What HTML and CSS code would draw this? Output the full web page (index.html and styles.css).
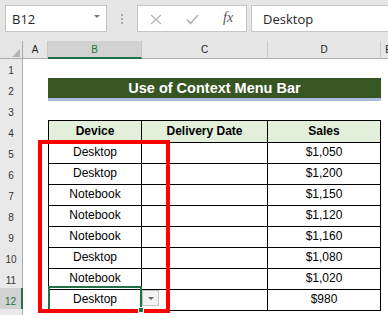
FILE: index.html
```html
<!DOCTYPE html>
<html lang="en">
<head>
    <meta charset="UTF-8">
    <meta name="viewport" content="width=device-width, initial-scale=1.0">
    <title>Use of Context Menu Bar</title>
    <link rel="stylesheet" href="styles.css">
</head>
<body>
    <!-- Formula bar -->
    <div class="toolbar">
        <div class="name-box">
            <span>B12</span>
            <span class="caret"></span>
        </div>
        <div class="grip"><i></i><i></i><i></i></div>
        <div class="fx-buttons">
            <svg class="btn-cancel" width="12" height="12" viewBox="0 0 12 12">
                <path d="M1 2 L11 11 M11 2 L1 11" stroke="#b4b4b4" stroke-width="1.3" fill="none"/>
            </svg>
            <svg class="btn-enter" width="13" height="11" viewBox="0 0 13 11">
                <path d="M1 5.5 L4.5 9.5 L12 1" stroke="#b4b4b4" stroke-width="1.6" fill="none"/>
            </svg>
            <span class="fx">fx</span>
        </div>
        <div class="formula">Desktop</div>
    </div>

    <!-- Worksheet -->
    <div class="sheet">
        <div class="row head">
            <div class="corner"></div>
            <div class="col-head">A</div>
            <div class="col-head active">B</div>
            <div class="col-head">C</div>
            <div class="col-head">D</div>
            <div class="col-head">E</div>
        </div>

        <div class="row">
            <div class="row-head">1</div>
            <div></div><div></div><div></div><div></div><div></div>
        </div>

        <div class="row">
            <div class="row-head">2</div>
            <div></div>
            <div class="title">Use of Context Menu Bar</div>
            <div></div>
        </div>

        <div class="row">
            <div class="row-head">3</div>
            <div></div><div></div><div></div><div></div><div></div>
        </div>

        <div class="row">
            <div class="row-head">4</div>
            <div></div>
            <div class="t th first">Device</div>
            <div class="t th">Delivery Date</div>
            <div class="t th">Sales</div>
            <div></div>
        </div>

        <div class="row">
            <div class="row-head">5</div>
            <div></div>
            <div class="t first">Desktop</div>
            <div class="t"></div>
            <div class="t">$1,050</div>
            <div></div>
        </div>

        <div class="row">
            <div class="row-head">6</div>
            <div></div>
            <div class="t first">Desktop</div>
            <div class="t"></div>
            <div class="t">$1,200</div>
            <div></div>
        </div>

        <div class="row">
            <div class="row-head">7</div>
            <div></div>
            <div class="t first">Notebook</div>
            <div class="t"></div>
            <div class="t">$1,150</div>
            <div></div>
        </div>

        <div class="row">
            <div class="row-head">8</div>
            <div></div>
            <div class="t first">Notebook</div>
            <div class="t"></div>
            <div class="t">$1,120</div>
            <div></div>
        </div>

        <div class="row">
            <div class="row-head">9</div>
            <div></div>
            <div class="t first">Notebook</div>
            <div class="t"></div>
            <div class="t">$1,160</div>
            <div></div>
        </div>

        <div class="row">
            <div class="row-head">10</div>
            <div></div>
            <div class="t first">Desktop</div>
            <div class="t"></div>
            <div class="t">$1,080</div>
            <div></div>
        </div>

        <div class="row">
            <div class="row-head">11</div>
            <div></div>
            <div class="t first">Notebook</div>
            <div class="t"></div>
            <div class="t">$1,020</div>
            <div></div>
        </div>

        <div class="row">
            <div class="row-head active">12</div>
            <div></div>
            <div class="t first selected">Desktop<span class="dropdown"></span></div>
            <div class="t"></div>
            <div class="t">$980</div>
            <div></div>
        </div>

        <!-- row 13 is only a sliver at the bottom edge -->
        <div class="row">
            <div class="row-head"></div>
            <div></div><div></div><div></div><div></div><div></div>
        </div>

        <!-- highlight drawn over column B -->
        <div class="red-box"></div>
    </div>
</body>
</html>
```

FILE: styles.css
```css
body {
    margin: 0;
    padding: 0;
    width: 388px;
    height: 315px;
    overflow: hidden;
    background-color: #fff;
    font-family: 'Liberation Sans', Arial, sans-serif;
    color: #000;
}

/* formula bar */
.toolbar {
    display: flex;
    align-items: flex-start;
    height: 41px;
    padding: 5px 0 0 5px;
    box-sizing: border-box;
    background-color: #e6e6e6;
    font-family: 'Open Sans', sans-serif;
    font-size: 13px;
    color: #262626;
}
.name-box,
.fx-buttons,
.formula {
    height: 27px;
    box-sizing: border-box;
    border: 1px solid #c6c6c6;
    background-color: #fff;
    display: flex;
    align-items: center;
}
.name-box {
    width: 102px;
    padding: 0 6px;
    justify-content: space-between;
}
.caret {
    width: 0;
    height: 0;
    border-left: 3px solid transparent;
    border-right: 3px solid transparent;
    border-top: 3px solid #7a7a7a;
    margin-top: -4px;
}
.grip {
    width: 30px;
    display: flex;
    flex-direction: column;
    align-items: center;
    gap: 2px;
    padding-top: 9px;
}
.grip i {
    display: block;
    width: 2px;
    height: 2px;
    background-color: #a6a6a6;
}
.fx-buttons {
    width: 110px;
    padding-left: 12px;
    gap: 24px;
}
.btn-enter {
    margin-top: 2px;
}
.fx {
    font-family: 'Liberation Serif', 'Times New Roman', serif;
    font-style: italic;
    font-size: 14px;
    color: #555;
    margin-top: -2px;
}
.formula {
    flex: 1;
    margin-left: 4px;
    padding-left: 11px;
    border-right: none;
}

/* worksheet grid */
.sheet {
    position: relative;
}
.row {
    display: grid;
    grid-template-columns: 23px 25px 94px 126px 113px 16px;
    height: 21px;
}
.row.head {
    height: 16px;
}
.corner,
.col-head {
    position: relative;
    box-sizing: border-box;
    background-color: #e6e6e6;
    border-right: 1px solid #c8c8c8;
    border-bottom: 1px solid #ababab;
}
.corner {
    border-right-color: #ababab;
}
.corner::after {
    content: '';
    position: absolute;
    right: 2px;
    bottom: 1px;
    width: 0;
    height: 0;
    border-left: 8px solid transparent;
    border-bottom: 8px solid #b4b4b4;
}
.col-head {
    font-size: 10px;
    line-height: 15px;
    padding-top: 1px;
    text-align: center;
    color: #222;
}
.col-head.active {
    background-color: #d2d2d2;
    border-bottom: 2px solid #217346;
    color: #217346;
}
.row-head {
    box-sizing: border-box;
    background-color: #e9e9e9;
    border-right: 1px solid #ababab;
    border-bottom: 1px solid #d4d4d4;
    font-size: 10px;
    line-height: 16px;
    padding-top: 6px;
    text-align: center;
    color: #333;
}
.row-head.active {
    background-color: #d2d2d2;
    border-right: 2px solid #217346;
    color: #217346;
}

.title {
    grid-column: span 3;
    align-self: start;
    height: 23px;
    box-sizing: border-box;
    background-color: #375623;
    border-bottom: 3px solid #a9bcdf;
    color: #fff;
    font-weight: bold;
    font-size: 14.5px;
    line-height: 20px;
    text-align: center;
}

/* bordered table B4:D12 */
.t {
    box-sizing: border-box;
    border-right: 1px solid #000;
    border-bottom: 1px solid #000;
    font-size: 12px;
    line-height: 17px;
    padding-top: 3px;
    text-align: center;
    white-space: nowrap;
}
.t.first {
    border-left: 1px solid #000;
}
.t.th {
    border-top: 1px solid #000;
    background-color: #e2efda;
    font-weight: bold;
    padding-top: 2px;
}
.t.selected {
    position: relative;
}
.t.selected::after {
    content: '';
    position: absolute;
    top: -2px;
    left: -1px;
    right: -1px;
    bottom: -1px;
    border: 2px solid #217346;
}
.t.selected::before {
    content: '';
    position: absolute;
    right: -3px;
    bottom: -3px;
    width: 4px;
    height: 4px;
    background-color: #217346;
    border: 1px solid #fff;
    z-index: 1;
}
.dropdown {
    position: absolute;
    left: 93px;
    top: 2px;
    width: 17px;
    height: 16px;
    box-sizing: border-box;
    background-color: #f3f3f3;
    border: 1px solid #c4c4c4;
}
.dropdown::after {
    content: '';
    position: absolute;
    left: 5px;
    top: 6px;
    width: 0;
    height: 0;
    border-left: 3px solid transparent;
    border-right: 3px solid transparent;
    border-top: 3px solid #666;
}

.red-box {
    position: absolute;
    left: 38px;
    top: 99px;
    width: 132px;
    height: 173px;
    box-sizing: border-box;
    border: 4px solid #f00;
}
```
